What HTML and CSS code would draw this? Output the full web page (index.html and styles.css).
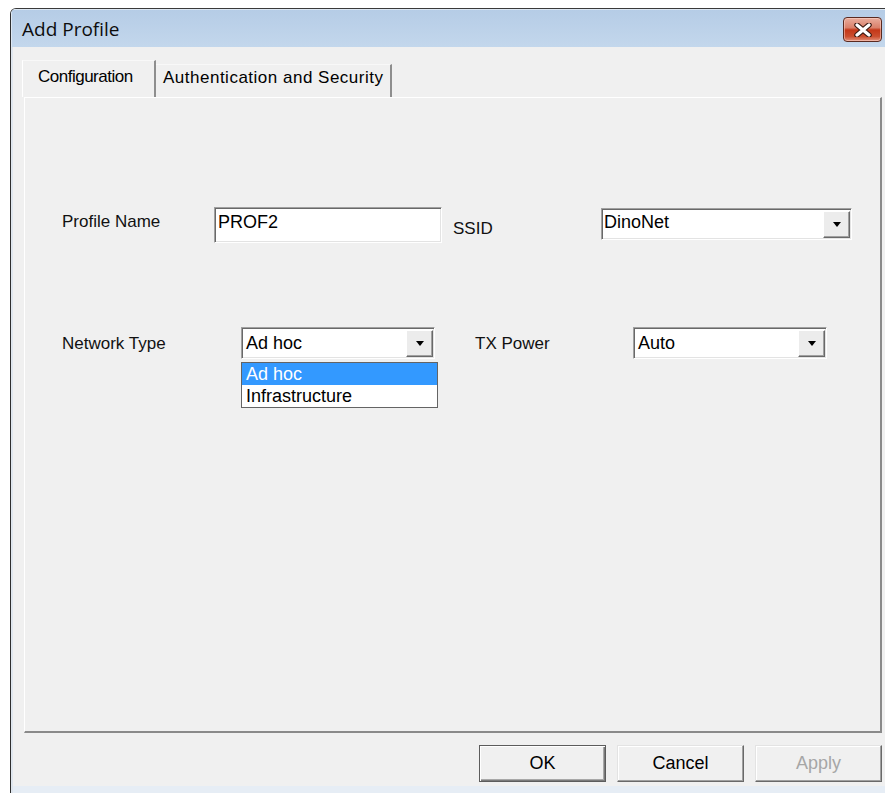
FILE: index.html
```html
<!DOCTYPE html>
<html lang="en">
<head>
<meta charset="utf-8">
<title>Add Profile</title>
<link rel="stylesheet" href="styles.css">
</head>
<body>
<div class="window">
  <div class="titlebar">
    <span class="title">Add Profile</span>
    <button class="close" aria-label="Close">
      <svg width="18" height="14" viewBox="0 0 18 14">
        <path d="M3 2 L15 12 M15 2 L3 12" stroke="#3b1a12" stroke-width="5.5" stroke-linecap="round"/>
        <path d="M3 2 L15 12 M15 2 L3 12" stroke="#ffffff" stroke-width="3.2" stroke-linecap="round"/>
      </svg>
    </button>
  </div>
  <div class="client">
    <div class="tabs">
      <div class="tab active">Configuration</div>
      <div class="tab">Authentication and Security</div>
    </div>
    <div class="panel">
      <div class="row row-name">
        <span class="label lbl-profile">Profile Name</span>
        <div class="edit w-profile">PROF2</div>
        <span class="label lbl-ssid">SSID</span>
        <div class="combo w-ssid">
          <span class="combo-text tight">DinoNet</span>
          <span class="combo-btn"><i class="arrow"></i></span>
        </div>
      </div>
      <div class="row row-type">
        <span class="label lbl-type">Network Type</span>
        <div class="combo w-type">
          <span class="combo-text">Ad hoc</span>
          <span class="combo-btn"><i class="arrow"></i></span>
          <ul class="droplist">
            <li class="selected">Ad hoc</li>
            <li>Infrastructure</li>
          </ul>
        </div>
        <span class="label lbl-tx">TX Power</span>
        <div class="combo w-tx">
          <span class="combo-text">Auto</span>
          <span class="combo-btn"><i class="arrow"></i></span>
        </div>
      </div>
    </div>
    <div class="buttons">
      <button class="btn default">OK</button>
      <button class="btn">Cancel</button>
      <button class="btn" disabled>Apply</button>
    </div>
    <div class="strip"></div>
  </div>
</div>
</body>
</html>
```

FILE: styles.css
```css
* { box-sizing: border-box; }

html, body {
  margin: 0;
  padding: 0;
  background: #ffffff;
  overflow: hidden;
}

body {
  font-family: "Liberation Sans", Arial, sans-serif;
  color: #000;
}

/* dialog frame */
.window {
  margin: 8px 0 0 10px;
  width: 875px;
  height: 785px;
  border-top: 1px solid #3a3a3a;
  border-left: 1px solid #2e2e2e;
  border-top-left-radius: 6px;
  background: #f0f0f0;
  display: flex;
  flex-direction: column;
  overflow: hidden;
}

.titlebar {
  height: 38px;
  flex: none;
  display: flex;
  align-items: flex-start;
  padding-left: 11px;
  background: linear-gradient(#b5cce6, #c3d7ec);
  box-shadow: inset 1px 1px 0 #dce7f3;
}

.title {
  margin-top: 7px;
  font-family: "Open Sans", "Noto Sans", sans-serif;
  font-size: 19px;
  line-height: 26px;
  color: #0d0d0d;
}

.close {
  margin: 8px 3px 0 auto;
  width: 39px;
  height: 25px;
  padding: 0;
  border: 1px solid #5a2a20;
  border-radius: 4px;
  background: linear-gradient(#e9ad9d 0%, #da806a 42%, #c43718 52%, #cb4e2f 80%, #e3917b 100%);
  box-shadow: inset 0 0 0 1px rgba(255, 220, 210, 0.5);
  display: flex;
  align-items: center;
  justify-content: center;
}

.client {
  flex: 1;
  display: flex;
  flex-direction: column;
  padding-top: 13px;
  border-left: 2px solid #dfe6ee;
}

/* tab strip */
.tabs {
  display: flex;
  align-items: flex-end;
  margin-left: 9px;
  height: 37px;
  flex: none;
}

.tab {
  font-size: 17px;
  line-height: 20px;
  white-space: nowrap;
  background: #f0f0f0;
  border-top: 1px solid #f8f8f8;
  border-right: 2px solid #8e8e8e;
}

.tab.active {
  width: 134px;
  height: 37px;
  padding: 6px 0 0 15px;
  border-left: 1px solid #ffffff;
  letter-spacing: -0.5px;
}

.tab:not(.active) {
  width: 236px;
  height: 33px;
  padding: 3px 0 0 7px;
  letter-spacing: 0.5px;
}

/* tab page */
.panel {
  margin-left: 11px;
  width: 858px;
  height: 636px;
  flex: none;
  padding: 109px 0 0 37px;
  border-top: 1px solid #ffffff;
  border-left: 1px solid #ffffff;
  border-right: 2px solid #8a8a8a;
  border-bottom: 2px solid #8a8a8a;
}

.row {
  display: flex;
  align-items: flex-start;
}

.row-type {
  margin-top: 84px;
}

.label {
  font-size: 17px;
  line-height: 20px;
  white-space: nowrap;
  color: #111;
}

.lbl-profile { width: 152px; margin-top: 5px; }
.lbl-ssid { width: 148px; margin-left: 11px; margin-top: 12px; }
.lbl-type { width: 179px; margin-top: 7px; }
.lbl-tx { width: 158px; margin-left: 40px; margin-top: 7px; }

/* sunken edit and combo boxes */
.edit,
.combo {
  background: #ffffff;
  border: 1px solid;
  border-color: #a0a0a0 #ffffff #ffffff #a0a0a0;
  box-shadow: inset 1px 1px 0 #696969, inset -1px -1px 0 #e3e3e3;
  font-size: 18px;
  line-height: 22px;
}

.edit {
  height: 36px;
  padding: 3px 3px 0;
}

.w-profile { width: 228px; }

.combo {
  position: relative;
  height: 32px;
  display: flex;
  align-items: stretch;
}

.w-ssid { width: 251px; margin-top: 1px; }
.w-type { width: 194px; }
.w-tx { width: 194px; }

.combo-text {
  flex: 1;
  padding: 4px 0 0 4px;
  white-space: nowrap;
}

.combo-text.tight {
  padding-left: 2px;
  padding-top: 2px;
}

.combo-btn {
  width: 27px;
  margin: 2px 1px 1px 0;
  background: #ececec;
  border: 1px solid;
  border-color: #ffffff #696969 #696969 #ffffff;
  box-shadow: inset -1px -1px 0 #a0a0a0;
  display: flex;
  align-items: center;
  justify-content: center;
}

.arrow {
  width: 0;
  height: 0;
  border-left: 4.5px solid transparent;
  border-right: 4.5px solid transparent;
  border-top: 5px solid #000;
}

/* open drop-down list of the network type box */
.droplist {
  position: absolute;
  top: 34px;
  left: -1px;
  width: 197px;
  margin: 0;
  padding: 0;
  list-style: none;
  background: #ffffff;
  border: 1px solid #646464;
  z-index: 2;
}

.droplist li {
  height: 22px;
  padding-left: 4px;
  font-size: 18px;
  line-height: 22px;
  white-space: nowrap;
}

.droplist li.selected {
  background: #3399ff;
  color: #ffffff;
}

/* command buttons */
.buttons {
  margin-top: 12px;
  padding-right: 3px;
  display: flex;
  justify-content: flex-end;
  gap: 11px;
  flex: none;
}

.btn {
  width: 127px;
  height: 37px;
  padding: 0;
  font-family: "Liberation Sans", Arial, sans-serif;
  font-size: 18px;
  color: #000;
  background: #f0f0f0;
  border: 1px solid;
  border-color: #e3e3e3 #696969 #696969 #e3e3e3;
  box-shadow: inset -1px -1px 0 #a0a0a0, inset 1px 1px 0 #ffffff;
}

.btn.default {
  border-color: #5c5c5c;
  box-shadow: inset 1px 1px 0 #ffffff, inset -1px -1px 0 #7a7a7a, inset -2px -2px 0 #a8a8a8;
}

.btn:disabled {
  color: #a6a6a6;
}

.strip {
  margin-top: auto;
  height: 7px;
  flex: none;
  background: #e6edf5;
}
```
